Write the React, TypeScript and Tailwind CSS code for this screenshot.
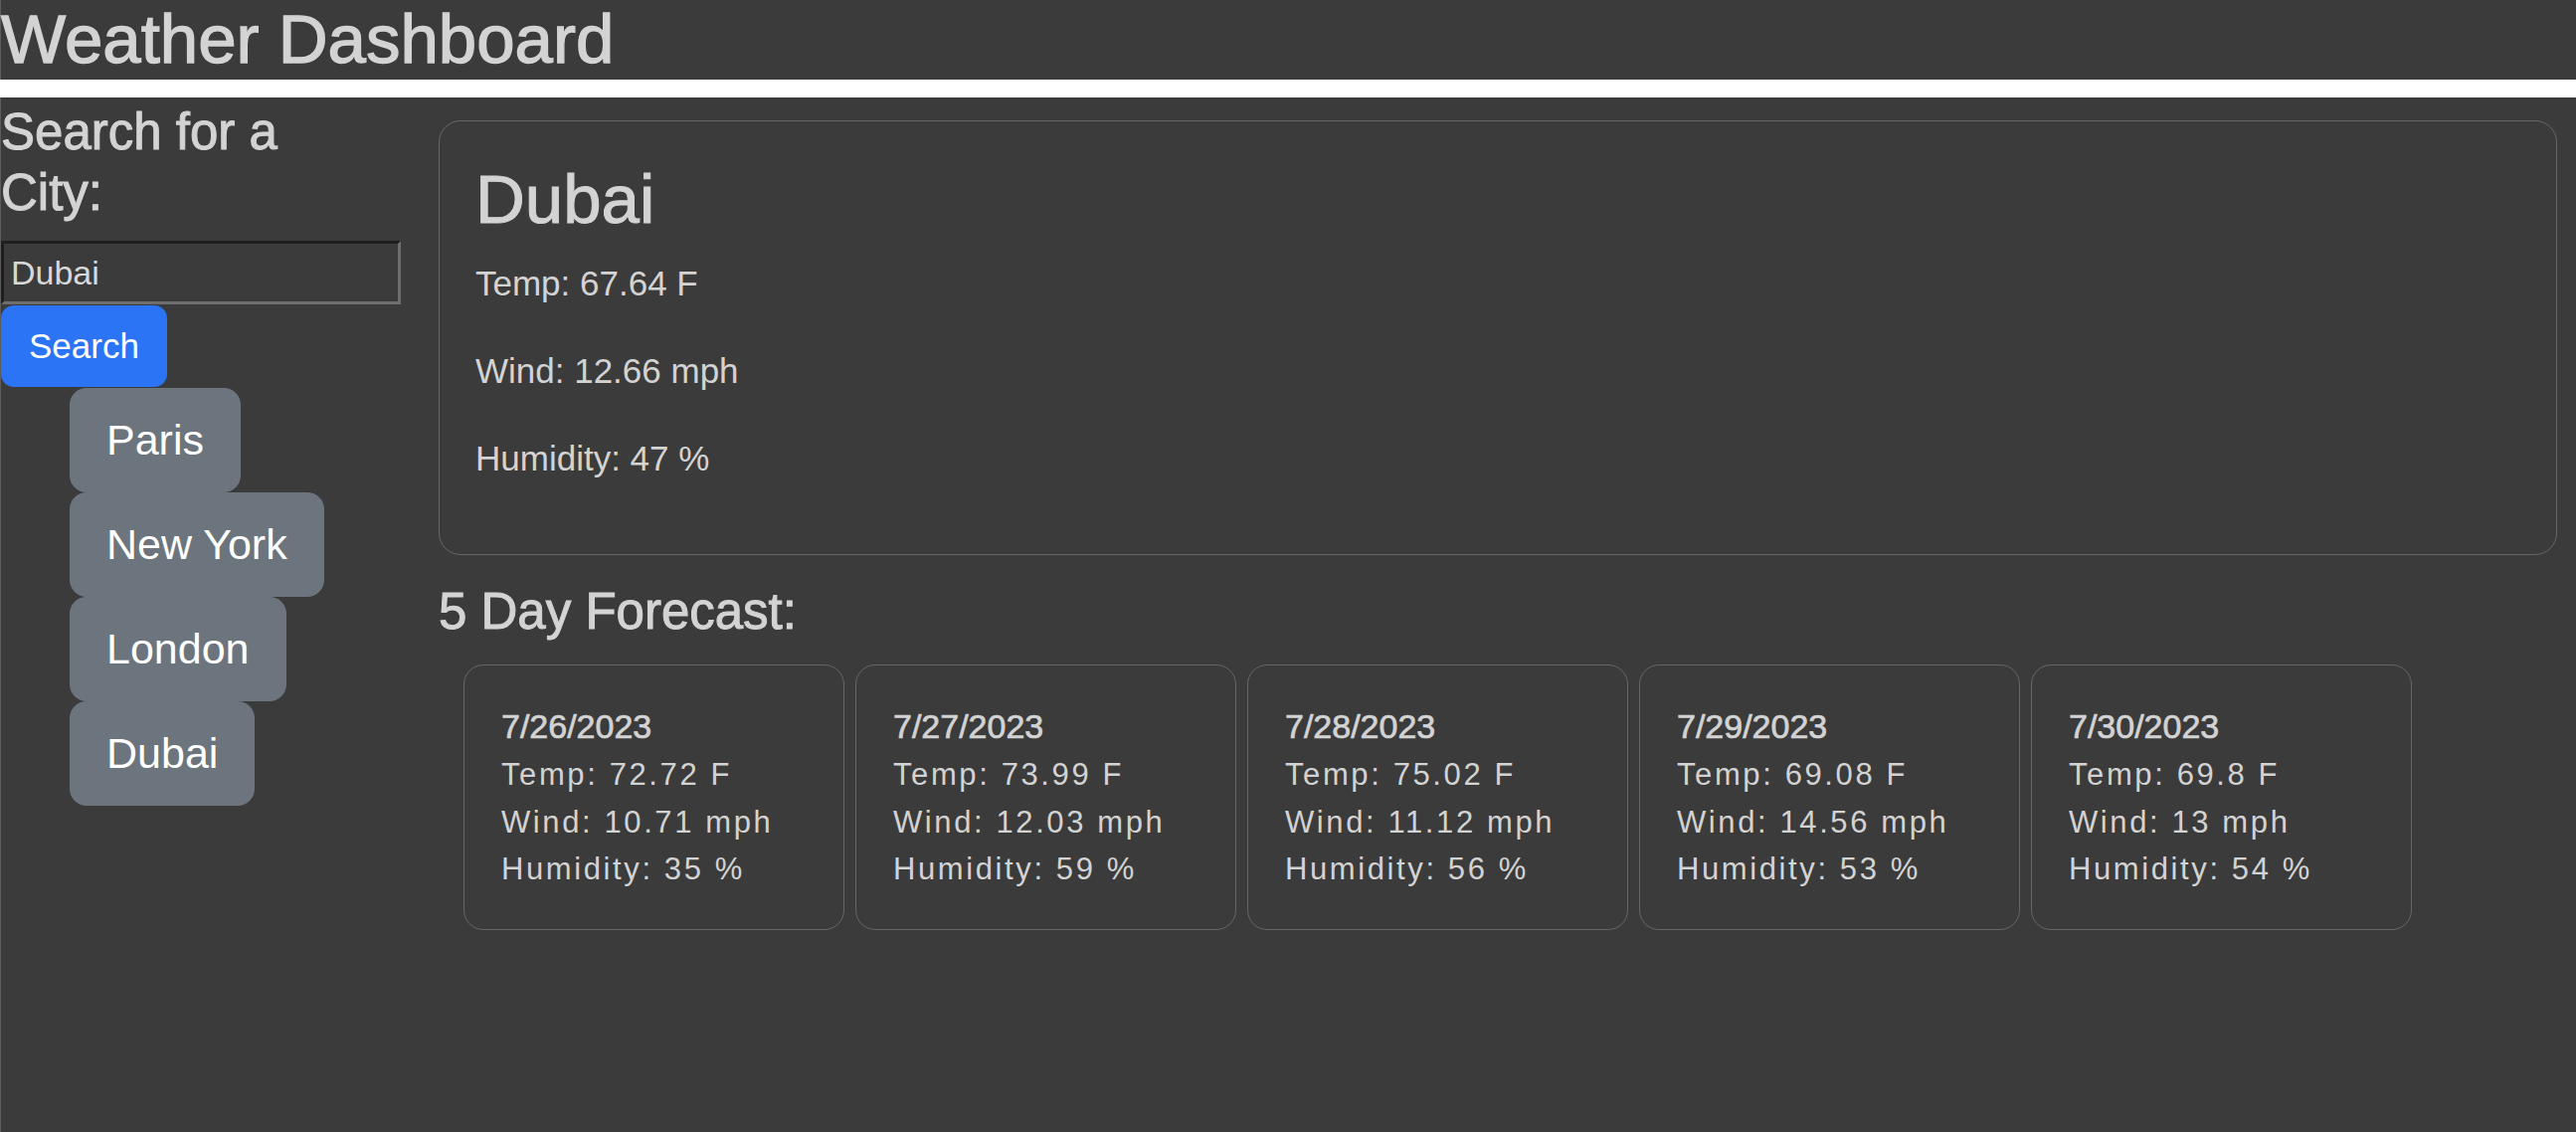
import { useState } from "react";

type Day = {
  date: string;
  temp: string;
  wind: string;
  humidity: string;
};

const forecast: Day[] = [
  { date: "7/26/2023", temp: "72.72", wind: "10.71", humidity: "35" },
  { date: "7/27/2023", temp: "73.99", wind: "12.03", humidity: "59" },
  { date: "7/28/2023", temp: "75.02", wind: "11.12", humidity: "56" },
  { date: "7/29/2023", temp: "69.08", wind: "14.56", humidity: "53" },
  { date: "7/30/2023", temp: "69.8", wind: "13", humidity: "54" },
];

const history = ["Paris", "New York", "London", "Dubai"];

function ForecastCard({ day }: { day: Day }) {
  return (
    <div className="w-[383px] shrink-0 rounded-[20px] border border-[#666] px-[37px] pt-[36px] pb-[36px]">
      <p className="text-[34px] leading-[50px] [-webkit-text-stroke:0.7px_#d3d3d3]">{day.date}</p>
      <p className="text-[31px] leading-[47.5px] tracking-[2.6px]">Temp: {day.temp} F</p>
      <p className="text-[31px] leading-[47.5px] tracking-[2.6px]">Wind: {day.wind} mph</p>
      <p className="text-[31px] leading-[47.5px] tracking-[2.6px]">Humidity: {day.humidity} %</p>
    </div>
  );
}

export default function App() {
  const [city, setCity] = useState("Dubai");

  return (
    <div className="min-h-screen flex flex-col bg-white text-[#d3d3d3] font-['Liberation_Sans',Arial,sans-serif]">
      {/* header */}
      <header className="h-[80px] bg-[#3b3b3b] border-l border-[#5c5c5c]">
        <h1 className="text-[69px] leading-[80px] [-webkit-text-stroke:1.3px_#d3d3d3]">Weather Dashboard</h1>
      </header>

      <div className="mt-[18px] flex-1 flex bg-[#3b3b3b] border-l border-[#5c5c5c]">
        {/* search side */}
        <aside className="w-[402px] shrink-0 pt-[4px]">
          <h2 className="max-w-[360px] mb-[18px] text-[51px] leading-[61px] [-webkit-text-stroke:1px_#d3d3d3]">
            Search for a City:
          </h2>
          <input
            value={city}
            onChange={(e) => setCity(e.target.value)}
            className="block w-[402px] h-[64px] px-[7px] bg-[#3b3b3b] text-[34px] text-[#d8d8d8] border-[3px] border-t-[#1e1e1e] border-l-[#1e1e1e] border-b-[#6e6e6e] border-r-[#6e6e6e] outline-none"
          />
          <button className="block mt-px h-[82px] px-[28px] rounded-[13px] bg-[#2b74f5] text-white text-[35px] leading-[52px]">
            Search
          </button>
          <div className="flex flex-col items-start pl-[69px] mt-px">
            {history.map((name) => (
              <button
                key={name}
                className="px-[37px] py-[21px] rounded-[17px] bg-[#6c757d] text-white text-[43px] leading-[63px]"
              >
                {name}
              </button>
            ))}
          </div>
        </aside>

        {/* current + forecast */}
        <main className="flex-1 ml-[38px] mr-[19px] pt-[23px]">
          <div className="rounded-[22px] border border-[#666] px-[36px] pt-[38px] pb-[34px]">
            <h2 className="mb-[17px] text-[69px] leading-[82px] [-webkit-text-stroke:1px_#d3d3d3]">Dubai</h2>
            <p className="mb-[36px] text-[35px] leading-[52px]">Temp: 67.64 F</p>
            <p className="mb-[36px] text-[35px] leading-[52px]">Wind: 12.66 mph</p>
            <p className="mb-[36px] text-[35px] leading-[52px]">Humidity: 47 %</p>
          </div>

          <h3 className="mt-[26px] text-[51px] leading-[61px] [-webkit-text-stroke:1px_#d3d3d3]">5 Day Forecast:</h3>

          <div className="mt-[23px] pl-[25px] flex gap-[11px]">
            {forecast.map((d) => (
              <ForecastCard key={d.date} day={d} />
            ))}
          </div>
        </main>
      </div>
    </div>
  );
}
